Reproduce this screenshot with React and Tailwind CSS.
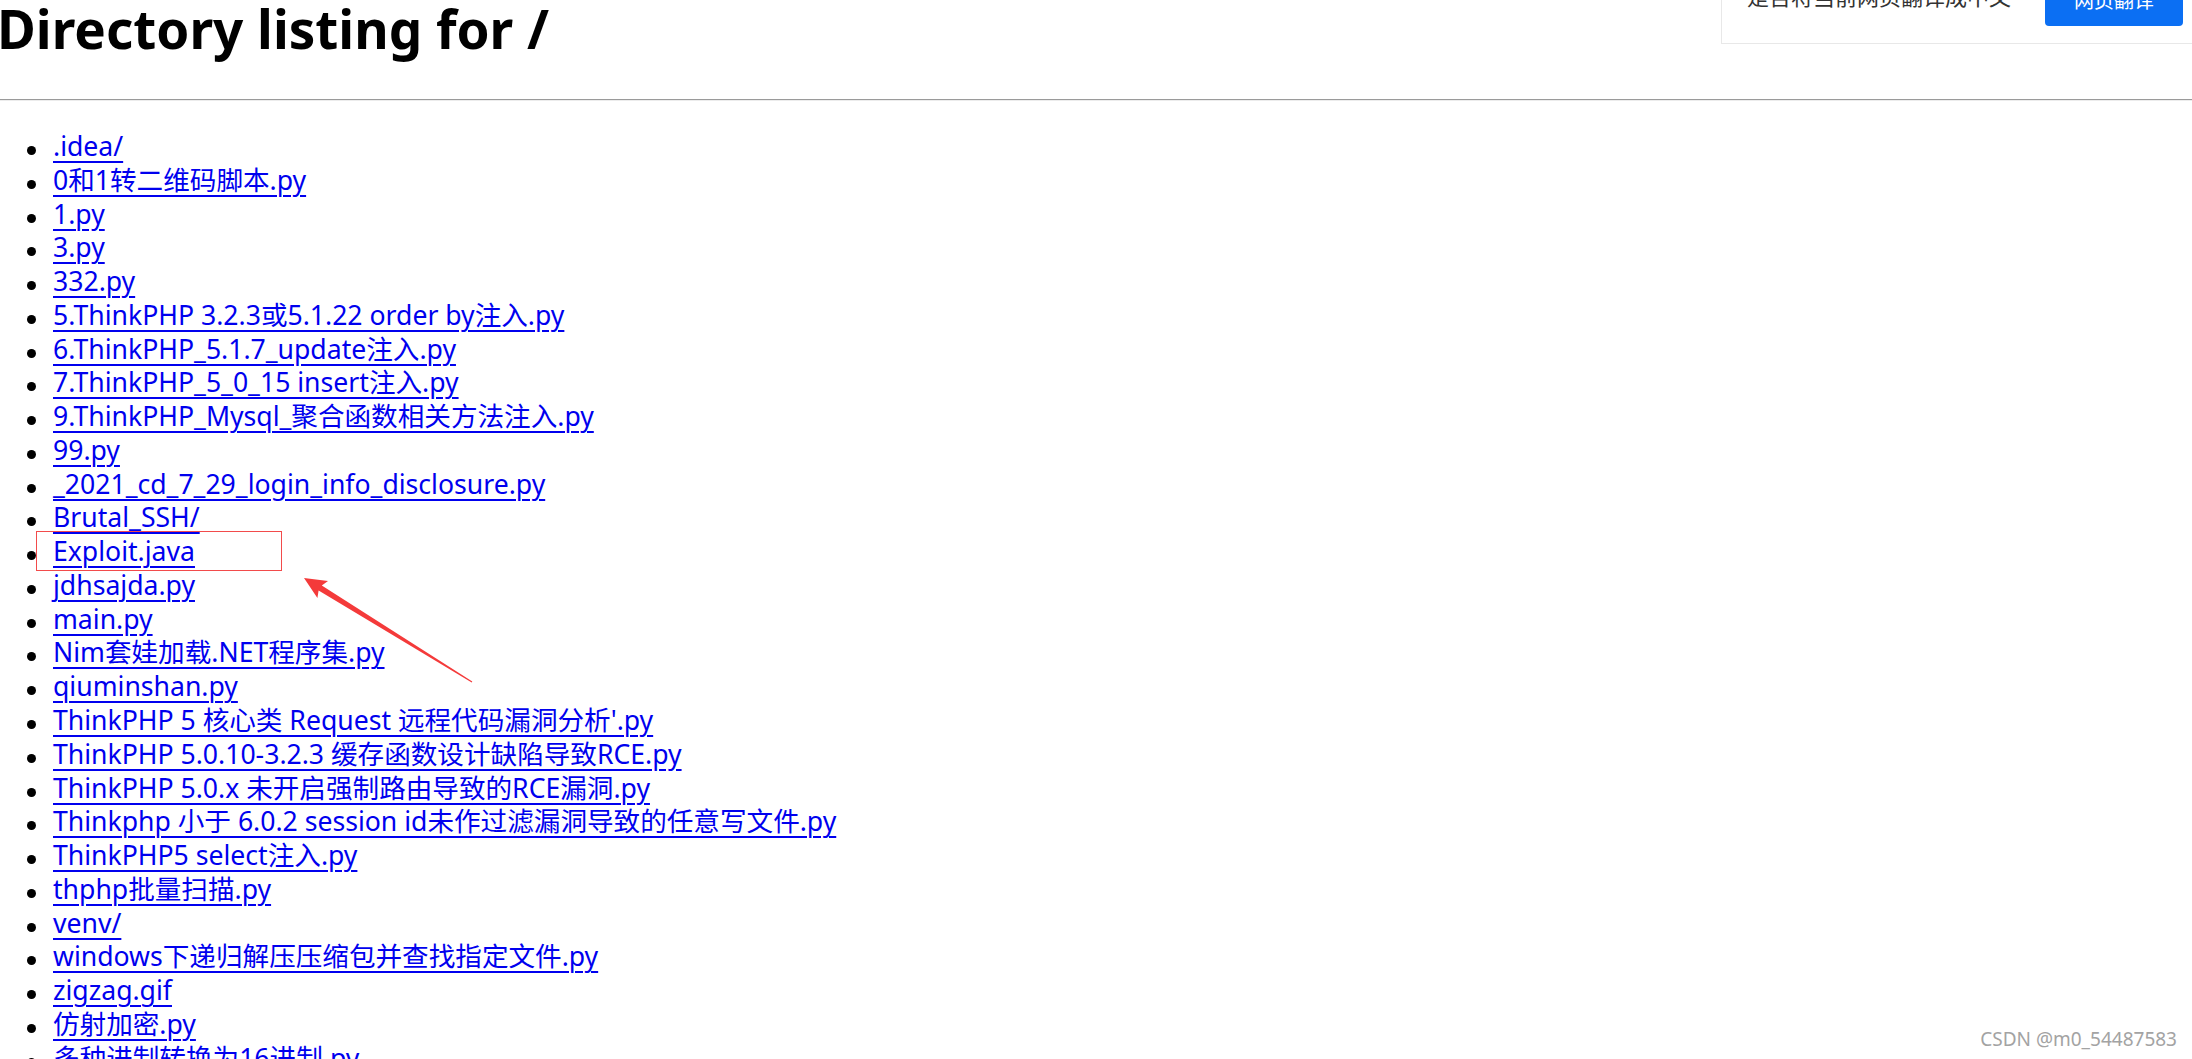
import React from "react";

const files = [
  ".idea/",
  "0和1转二维码脚本.py",
  "1.py",
  "3.py",
  "332.py",
  "5.ThinkPHP 3.2.3或5.1.22 order by注入.py",
  "6.ThinkPHP_5.1.7_update注入.py",
  "7.ThinkPHP_5_0_15 insert注入.py",
  "9.ThinkPHP_Mysql_聚合函数相关方法注入.py",
  "99.py",
  "_2021_cd_7_29_login_info_disclosure.py",
  "Brutal_SSH/",
  "Exploit.java",
  "jdhsajda.py",
  "main.py",
  "Nim套娃加载.NET程序集.py",
  "qiuminshan.py",
  "ThinkPHP 5 核心类 Request 远程代码漏洞分析'.py",
  "ThinkPHP 5.0.10-3.2.3 缓存函数设计缺陷导致RCE.py",
  "ThinkPHP 5.0.x 未开启强制路由导致的RCE漏洞.py",
  "Thinkphp 小于 6.0.2 session id未作过滤漏洞导致的任意写文件.py",
  "ThinkPHP5 select注入.py",
  "thphp批量扫描.py",
  "venv/",
  "windows下递归解压压缩包并查找指定文件.py",
  "zigzag.gif",
  "仿射加密.py",
  "多种进制转换为16进制.py",
];

const App = () => {
  return (
    <div className="relative w-[2192px] h-[1059px] overflow-hidden bg-white text-black font-['Noto_Sans','Noto_Sans_CJK_SC',sans-serif]">
      <h1 className="mt-[-3px] ml-[-3px] text-[53px] font-bold leading-[64px] whitespace-nowrap">Directory listing for /</h1>
      <hr className="mt-[38px] border-t border-b border-t-[#9a9a9a] border-b-[#ececec]" />
      <ul className="mt-[29px] flex flex-col text-[26.6px] leading-[33.76px]">
        {files.map((name, index) => (
          <li key={index} className="flex items-start">
            <span className="mt-[16px] ml-[27px] mr-[17px] w-[9px] h-[9px] shrink-0 rounded-full bg-black" />
            <a href={"#" + name} className="text-[#0000ee] underline decoration-[2px] underline-offset-[5px] whitespace-nowrap">
              {name}
            </a>
          </li>
        ))}
      </ul>

      {/* translate prompt, cut at the top of the window */}
      <div className="absolute left-[1721px] top-[-40px] w-[520px] h-[84px] bg-white border border-[#e8e8e8] flex items-start">
        <span className="mt-[22px] ml-[25px] text-[22px] leading-[26px] text-[#333] whitespace-nowrap">是否将当前网页翻译成中文</span>
        <button className="mt-[15px] ml-[34px] h-[50px] px-[29px] bg-[#0b6ff3] rounded-[4px] text-white text-[20px] leading-[24px] whitespace-nowrap">
          网页翻译
        </button>
      </div>

      {/* annotation */}
      <div className="absolute left-[36px] top-[531px] w-[246px] h-[40px] border border-[#f24b4b]" />
      <svg className="absolute left-[300px] top-[572px]" width="180" height="115" viewBox="0 0 180 115">
        <polygon
          points="4,6 28,9 21.8,13.5 172.3,109.6 171.7,110.4 18.6,18.6 17.4,26.1"
          fill="#f43a3a"
        />
      </svg>

      <div className="absolute right-[15px] bottom-[8px] text-[19px] leading-[24px] text-[#a3a3a3] whitespace-nowrap">CSDN @m0_54487583</div>
    </div>
  );
};

export default App;
